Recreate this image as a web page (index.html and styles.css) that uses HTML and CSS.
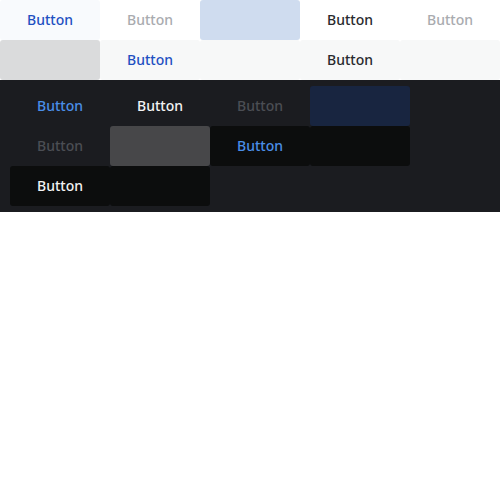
FILE: index.html
```html
<!DOCTYPE html>
<html>
<head>
<meta charset="utf-8">
<link rel="stylesheet" href="styles.css">
</head>
<body>
<div class="light">
  <button class="btn l-primary-subtle">Button</button>
  <button class="btn l-muted">Button</button>
  <button class="btn l-selected"></button>
  <button class="btn l-dark">Button</button>
  <button class="btn l-muted">Button</button>
  <button class="btn l-gray"></button>
  <button class="btn l-subtle l-blue">Button</button>
  <button class="btn l-subtle"></button>
  <button class="btn l-subtle l-dark">Button</button>
  <button class="btn l-subtle"></button>
</div>
<div class="dark">
  <button class="btn d-blue">Button</button>
  <button class="btn d-white">Button</button>
  <button class="btn d-gray">Button</button>
  <button class="btn d-selected"></button>
  <button class="btn d-gray">Button</button>
  <button class="btn d-graybg"></button>
  <button class="btn d-black d-blue">Button</button>
  <button class="btn d-black"></button>
  <button class="btn d-black d-white">Button</button>
  <button class="btn d-black"></button>
</div>
</body>
</html>
```
FILE: styles.css
```css
html, body {
  margin: 0;
  padding: 0;
  background: #ffffff;
}
body {
  font-family: "Noto Sans", "Open Sans", sans-serif;
}
.btn {
  width: 100px;
  height: 40px;
  border: none;
  border-radius: 3px;
  margin: 0;
  padding: 0 0 2px 0;
  font-family: "Noto Sans", "Open Sans", sans-serif;
  font-size: 14px;
  font-weight: 500;
  background: transparent;
  display: flex;
  align-items: center;
  justify-content: center;
}
.light {
  display: grid;
  grid-template-columns: repeat(5, 100px);
  background: #ffffff;
}
.l-primary-subtle { background: #f8fafd; color: #1f50c2; }
.l-muted { color: #a9abaf; }
.l-selected { background: #cfdcef; }
.l-dark { color: #292a2e; }
.l-gray { background: #dadbdc; }
.l-subtle { background: #f7f8f8; }
.l-blue { color: #1f50c2; }
.dark {
  background: #1b1c20;
  padding: 6px 10px;
  display: grid;
  grid-template-columns: repeat(4, 100px);
}
.d-blue { color: #4a8ee8; }
.d-white { color: #f2f3f4; }
.d-gray { color: #4b4e54; }
.d-selected { background: #182540; }
.d-graybg { background: #474749; }
.d-black { background: #0c0d0d; }
```
